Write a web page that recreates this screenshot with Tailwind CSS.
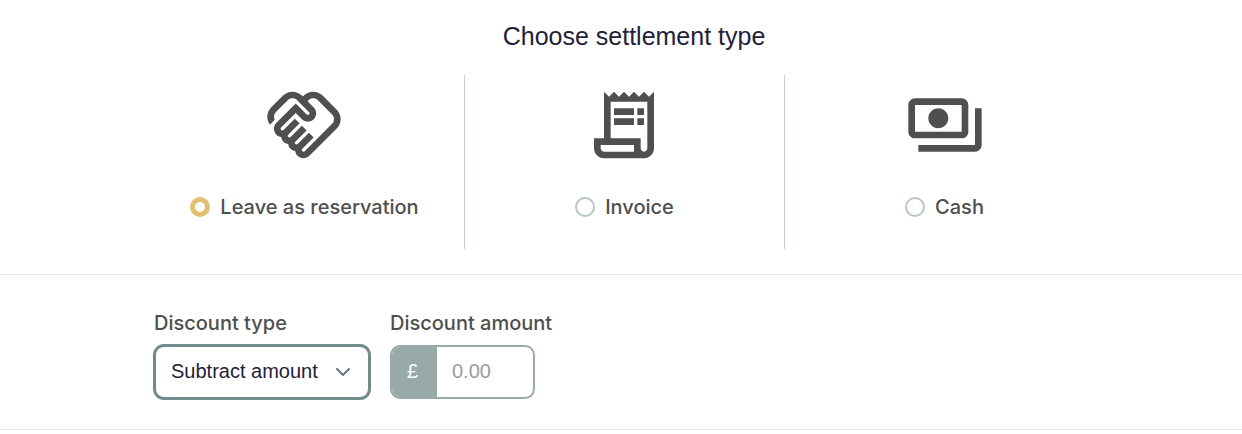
<!DOCTYPE html>
<html lang="en">
<head>
<meta charset="utf-8">
<title>Settlement</title>
<script src="https://cdn.jsdelivr.net/npm/@tailwindcss/browser@4"></script>
</head>
<body class="bg-white font-['Inter',sans-serif] text-[#4f4f4f]">
<section class="h-[275px] border-b border-[#ebebeb]">
  <h2 class="h-[75px] pt-[18px] pl-[26px] text-center font-['Liberation_Sans',sans-serif] text-[25px] leading-[37px] text-[#1f2138]">Choose settlement type</h2>
  <div class="ml-[145px] grid h-[174px] w-[960px] grid-cols-3 text-[20px] font-medium leading-6">
    <label class="flex flex-col items-center border-r border-[#d0cfbf] pt-[10px]">
      <svg class="mr-px size-20" viewBox="0 0 24 24" fill="currentColor"><path d="M12.22 19.85c-.18.18-.5.21-.71 0-.18-.18-.21-.5 0-.71l3.39-3.39-1.41-1.41-3.39 3.39c-.19.2-.51.19-.71 0-.21-.21-.18-.53 0-.71l3.39-3.39-1.41-1.41-3.39 3.39c-.18.18-.5.21-.71 0-.19-.19-.19-.51 0-.71l3.39-3.39-1.42-1.41-3.39 3.39c-.18.18-.5.21-.71 0-.19-.2-.19-.51 0-.71L9.52 8.4l1.87 1.86c.95.95 2.59.94 3.54 0 .98-.98.98-2.56 0-3.54l-1.86-1.86.28-.28c.78-.78 2.05-.78 2.83 0l4.24 4.24c.78.78.78 2.05 0 2.83l-8.2 8.2zm9.61-6.78c1.56-1.56 1.56-4.09 0-5.66l-4.24-4.24c-1.56-1.56-4.09-1.56-5.66 0l-.28.28-.28-.28c-1.56-1.56-4.09-1.56-5.66 0L2.17 6.71C.75 8.13.62 10.34 1.77 11.9l1.45-1.45c-.39-.75-.26-1.7.37-2.33l3.54-3.54c.78-.78 2.05-.78 2.83 0l3.56 3.56c.18.18.21.5 0 .71-.21.21-.53.18-.71 0L9.52 5.57l-5.8 5.79c-.98.97-.98 2.56 0 3.54.39.39.89.63 1.42.7.07.52.3 1.02.7 1.42.4.4.9.63 1.42.7.07.52.3 1.02.7 1.42.4.4.9.63 1.42.7.07.54.31 1.03.7 1.42.47.47 1.1.73 1.77.73.67 0 1.3-.26 1.77-.73l8.21-8.19z"/></svg>
      <span class="mt-[30px] flex items-center gap-[10px]"><span class="size-5 rounded-full border-[5px] border-[#e4bf73]"></span>Leave as reservation</span>
    </label>
    <label class="flex flex-col items-center border-r border-[#d0cfbf] pt-[10px]">
      <svg class="mr-px size-20" viewBox="0 0 24 24" fill="currentColor"><path d="M19.5 3.5L18 2l-1.5 1.5L15 2l-1.5 1.5L12 2l-1.5 1.5L9 2 7.5 3.5 6 2v14H3v3c0 1.66 1.34 3 3 3h12c1.66 0 3-1.34 3-3V2l-1.5 1.5zM15 20H6c-.55 0-1-.45-1-1v-1h10v2zm4-1c0 .55-.45 1-1 1s-1-.45-1-1v-3H8V5h11v14z"/><path d="M9 7h6v2H9zM16 7h2v2h-2zM9 10h6v2H9zM16 10h2v2h-2z"/></svg>
      <span class="mt-[30px] flex items-center gap-[10px]"><span class="size-5 rounded-full border-2 border-[#b7c6c4]"></span>Invoice</span>
    </label>
    <label class="flex flex-col items-center pt-[10px] pr-px">
      <svg class="size-20" viewBox="0 0 24 24" fill="currentColor"><path d="M19 14V6c0-1.1-.9-2-2-2H3c-1.1 0-2 .9-2 2v8c0 1.1.9 2 2 2h14c1.1 0 2-.9 2-2zm-2 0H3V6h14v8zm-7-7c-1.66 0-3 1.34-3 3s1.34 3 3 3 3-1.34 3-3-1.34-3-3-3zm13 0v11c0 1.1-.9 2-2 2H4v-2h17V7h2z"/></svg>
      <span class="mt-[30px] flex items-center gap-[10px]"><span class="size-5 rounded-full border-2 border-[#b7c6c4]"></span>Cash</span>
    </label>
  </div>
</section>
<section class="flex h-[155px] gap-[19px] border-b border-[#ebebeb] pl-[153px] pt-9">
  <div class="w-[218px]">
    <div class="ml-px h-[33px] text-[20px] font-medium leading-6">Discount type</div>
    <div class="flex h-14 items-center justify-between rounded-[11px] border-3 border-[#718b88] pl-[15px] pr-[17px] font-['Liberation_Sans',sans-serif] text-[20px] text-[#1f2138]"><span class="pb-0.5">Subtract amount</span>
      <svg class="h-[10px] w-4" viewBox="0 0 16 10" fill="none" stroke="#6b7280" stroke-width="2" stroke-linecap="round" stroke-linejoin="round"><path d="M2 2l6 6 6-6"/></svg>
    </div>
  </div>
  <div>
    <div class="h-[34px] text-[20px] font-medium leading-6">Discount amount</div>
    <div class="flex h-[54px] w-[145px] overflow-hidden rounded-[10px] border-2 border-[#97aaa7] font-['Liberation_Sans',sans-serif] text-[20px] leading-[48px]">
      <span class="w-[45px] bg-[#97aaa7] pl-[15px] text-white">£</span>
      <span class="pl-[15px] text-[#9b9b9b]">0.00</span>
    </div>
  </div>
</section>
</body>
</html>
